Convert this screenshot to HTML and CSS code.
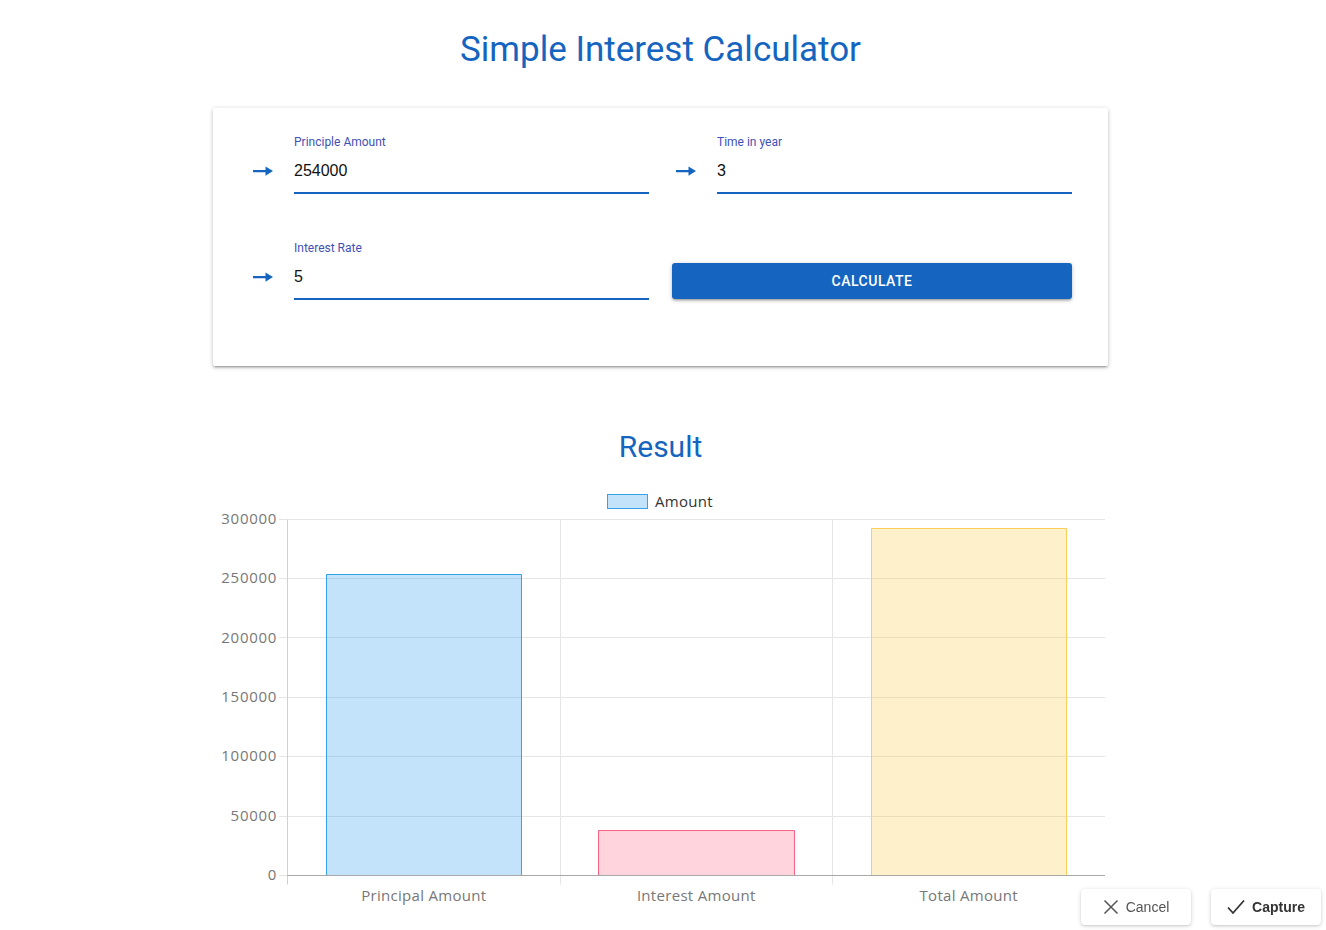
FILE: index.html
```html
<!DOCTYPE html>
<html lang="en">
<head>
<meta charset="utf-8">
<title>Simple Interest Calculator</title>
<link rel="stylesheet" href="styles.css">
</head>
<body>
<main class="page">
  <h1 class="title">Simple Interest Calculator</h1>

  <section class="card">
    <div class="grid">
      <div class="field">
        <svg class="arrow" viewBox="0 0 20 10" width="20" height="10"><path d="M0 4h13v2.2H0z M12.5 0.5L20 5.1L12.5 9.7z" fill="#1565c0"/></svg>
        <div class="control">
          <label class="label">Principle Amount</label>
          <div class="input">254000</div>
        </div>
      </div>
      <div class="field">
        <svg class="arrow" viewBox="0 0 20 10" width="20" height="10"><path d="M0 4h13v2.2H0z M12.5 0.5L20 5.1L12.5 9.7z" fill="#1565c0"/></svg>
        <div class="control">
          <label class="label">Time in year</label>
          <div class="input">3</div>
        </div>
      </div>
      <div class="field">
        <svg class="arrow" viewBox="0 0 20 10" width="20" height="10"><path d="M0 4h13v2.2H0z M12.5 0.5L20 5.1L12.5 9.7z" fill="#1565c0"/></svg>
        <div class="control">
          <label class="label">Interest Rate</label>
          <div class="input">5</div>
        </div>
      </div>
      <div class="btn-cell">
        <button class="calc">CALCULATE</button>
      </div>
    </div>
  </section>

  <h2 class="result">Result</h2>

  <div class="chart">
    <svg width="895" height="425" viewBox="0 0 895 425" class="chart-svg">
      <!-- legend -->
      <rect x="394.5" y="9.5" width="40" height="14" fill="rgba(54,162,235,0.3)" stroke="#36a2eb" stroke-width="1"/>
      <text x="442" y="16" class="legend-text">Amount</text>

      <!-- grid -->
      <g stroke="#e5e5e5" stroke-width="1">
        <line x1="66" y1="34.5" x2="892" y2="34.5"/>
        <line x1="66" y1="93.5" x2="892" y2="93.5"/>
        <line x1="66" y1="152.5" x2="892" y2="152.5"/>
        <line x1="66" y1="212.5" x2="892" y2="212.5"/>
        <line x1="66" y1="271.5" x2="892" y2="271.5"/>
        <line x1="66" y1="331.5" x2="892" y2="331.5"/>
        <line x1="347.5" y1="34.5" x2="347.5" y2="399.5"/>
        <line x1="619.5" y1="34.5" x2="619.5" y2="399.5"/>
      </g>
      <line x1="66" y1="390.5" x2="74.5" y2="390.5" stroke="#e5e5e5"/>
      <line x1="74.5" y1="34.5" x2="74.5" y2="399.5" stroke="#d0d0d0"/>

      <!-- bars -->
      <rect x="113" y="89.5" width="195" height="301" fill="rgba(54,162,235,0.3)"/>
      <path d="M113.5 390V89.5H308.5V390" fill="none" stroke="#36a2eb"/>
      <rect x="385" y="345.5" width="196" height="45" fill="rgba(255,99,132,0.28)"/>
      <path d="M385.5 390V345.5H581.5V390" fill="none" stroke="#ff6384"/>
      <rect x="658" y="43.5" width="196" height="347" fill="rgba(255,206,86,0.3)"/>
      <path d="M658.5 390V43.5H853.5V390" fill="none" stroke="#ffce56"/>

      <line x1="74.5" y1="390.5" x2="892" y2="390.5" stroke="#a8a8a8"/>

      <!-- y labels -->
      <g class="tick-y">
        <text x="64" y="33">300000</text>
        <text x="64" y="92.3">250000</text>
        <text x="64" y="151.7">200000</text>
        <text x="64" y="211">150000</text>
        <text x="64" y="270.3">100000</text>
        <text x="64" y="329.7">50000</text>
        <text x="64" y="389">0</text>
      </g>
      <!-- x labels -->
      <g class="tick-x">
        <text x="210.75" y="409.5">Principal Amount</text>
        <text x="483.25" y="409.5">Interest Amount</text>
        <text x="755.75" y="409.5">Total Amount</text>
      </g>
    </svg>
  </div>
</main>

<div class="actions">
  <button class="act cancel">
    <svg width="16" height="16" viewBox="0 0 16 16"><path d="M1.5 1.5L14.5 14.5M14.5 1.5L1.5 14.5" stroke="#555" stroke-width="1.5" fill="none"/></svg>
    <span>Cancel</span>
  </button>
  <button class="act capture">
    <svg width="18" height="16" viewBox="0 0 18 16"><path d="M1 8.5L6 14L17 1.5" stroke="#333" stroke-width="1.8" fill="none"/></svg>
    <span>Capture</span>
  </button>
</div>
</body>
</html>
```

FILE: styles.css
```css
* { box-sizing: border-box; }

html, body {
  margin: 0;
  padding: 0;
  background: #ffffff;
}

body {
  font-family: Roboto, "Liberation Sans", Arial, sans-serif;
  padding-right: 5px;
}

.page {
  display: flex;
  flex-direction: column;
  align-items: center;
}

.title {
  margin: 29px 0 0;
  font-size: 35px;
  line-height: 42px;
  font-weight: 400;
  color: #1565c0;
}

.card {
  margin-top: 37px;
  width: 895px;
  background: #fff;
  border-radius: 2px;
  box-shadow: 0 2px 2px 0 rgba(0,0,0,0.14), 0 3px 1px -2px rgba(0,0,0,0.12), 0 1px 5px 0 rgba(0,0,0,0.2);
  padding: 26px 36px 66px;
}

.grid {
  display: grid;
  grid-template-columns: 400px 400px;
  column-gap: 23px;
  row-gap: 46px;
}

.field {
  display: flex;
  align-items: flex-start;
  padding-left: 4px;
}

.arrow {
  flex: none;
  margin-top: 32px;
  margin-right: 21px;
}

.control {
  flex: 1;
  display: flex;
  flex-direction: column;
}

.label {
  font-size: 12px;
  line-height: 16px;
  color: #3f51b5;
  margin-bottom: 11px;
}

.input {
  font-family: "Liberation Sans", Arial, sans-serif;
  font-size: 16px;
  line-height: 20px;
  color: #111;
  padding-bottom: 11px;
  border-bottom: 2px solid #1565c0;
}

.btn-cell {
  display: flex;
  align-items: flex-end;
}

.calc {
  width: 400px;
  height: 36px;
  margin-bottom: 1px;
  border: none;
  border-radius: 3px;
  background: #1565c0;
  color: #fff;
  font-family: Roboto, sans-serif;
  font-weight: 500;
  font-size: 14px;
  letter-spacing: 0.5px;
  box-shadow: 0 2px 2px 0 rgba(0,0,0,0.14), 0 3px 1px -2px rgba(0,0,0,0.12), 0 1px 5px 0 rgba(0,0,0,0.2);
}

.result {
  margin: 63px 0 0;
  font-size: 30px;
  line-height: 36px;
  font-weight: 400;
  color: #1565c0;
}

.chart {
  margin-top: 20px;
  width: 895px;
  height: 425px;
}

.chart-svg {
  display: block;
  font-family: "Open Sans", "Noto Sans", sans-serif;
}

.legend-text {
  font-size: 15px;
  letter-spacing: 0.3px;
  fill: #333;
  dominant-baseline: central;
}

.tick-y text {
  font-size: 15px;
  letter-spacing: 0.7px;
  fill: #777;
  text-anchor: end;
  dominant-baseline: central;
}

.tick-x text {
  font-size: 15px;
  letter-spacing: 0.3px;
  fill: #777;
  text-anchor: middle;
  dominant-baseline: central;
}

.actions {
  position: fixed;
  right: 5px;
  bottom: 5px;
  display: flex;
  gap: 20px;
}

.act {
  width: 110px;
  height: 36px;
  border: none;
  border-radius: 4px;
  background: #fff;
  box-shadow: 0 1px 4px rgba(0,0,0,0.18), 0 1px 2px rgba(0,0,0,0.08);
  display: flex;
  align-items: center;
  justify-content: center;
  gap: 7px;
  font-family: "Liberation Sans", Arial, sans-serif;
  font-size: 14px;
  padding: 0;
}

.cancel { color: #555; }
.capture { color: #333; font-weight: 700; }
```
